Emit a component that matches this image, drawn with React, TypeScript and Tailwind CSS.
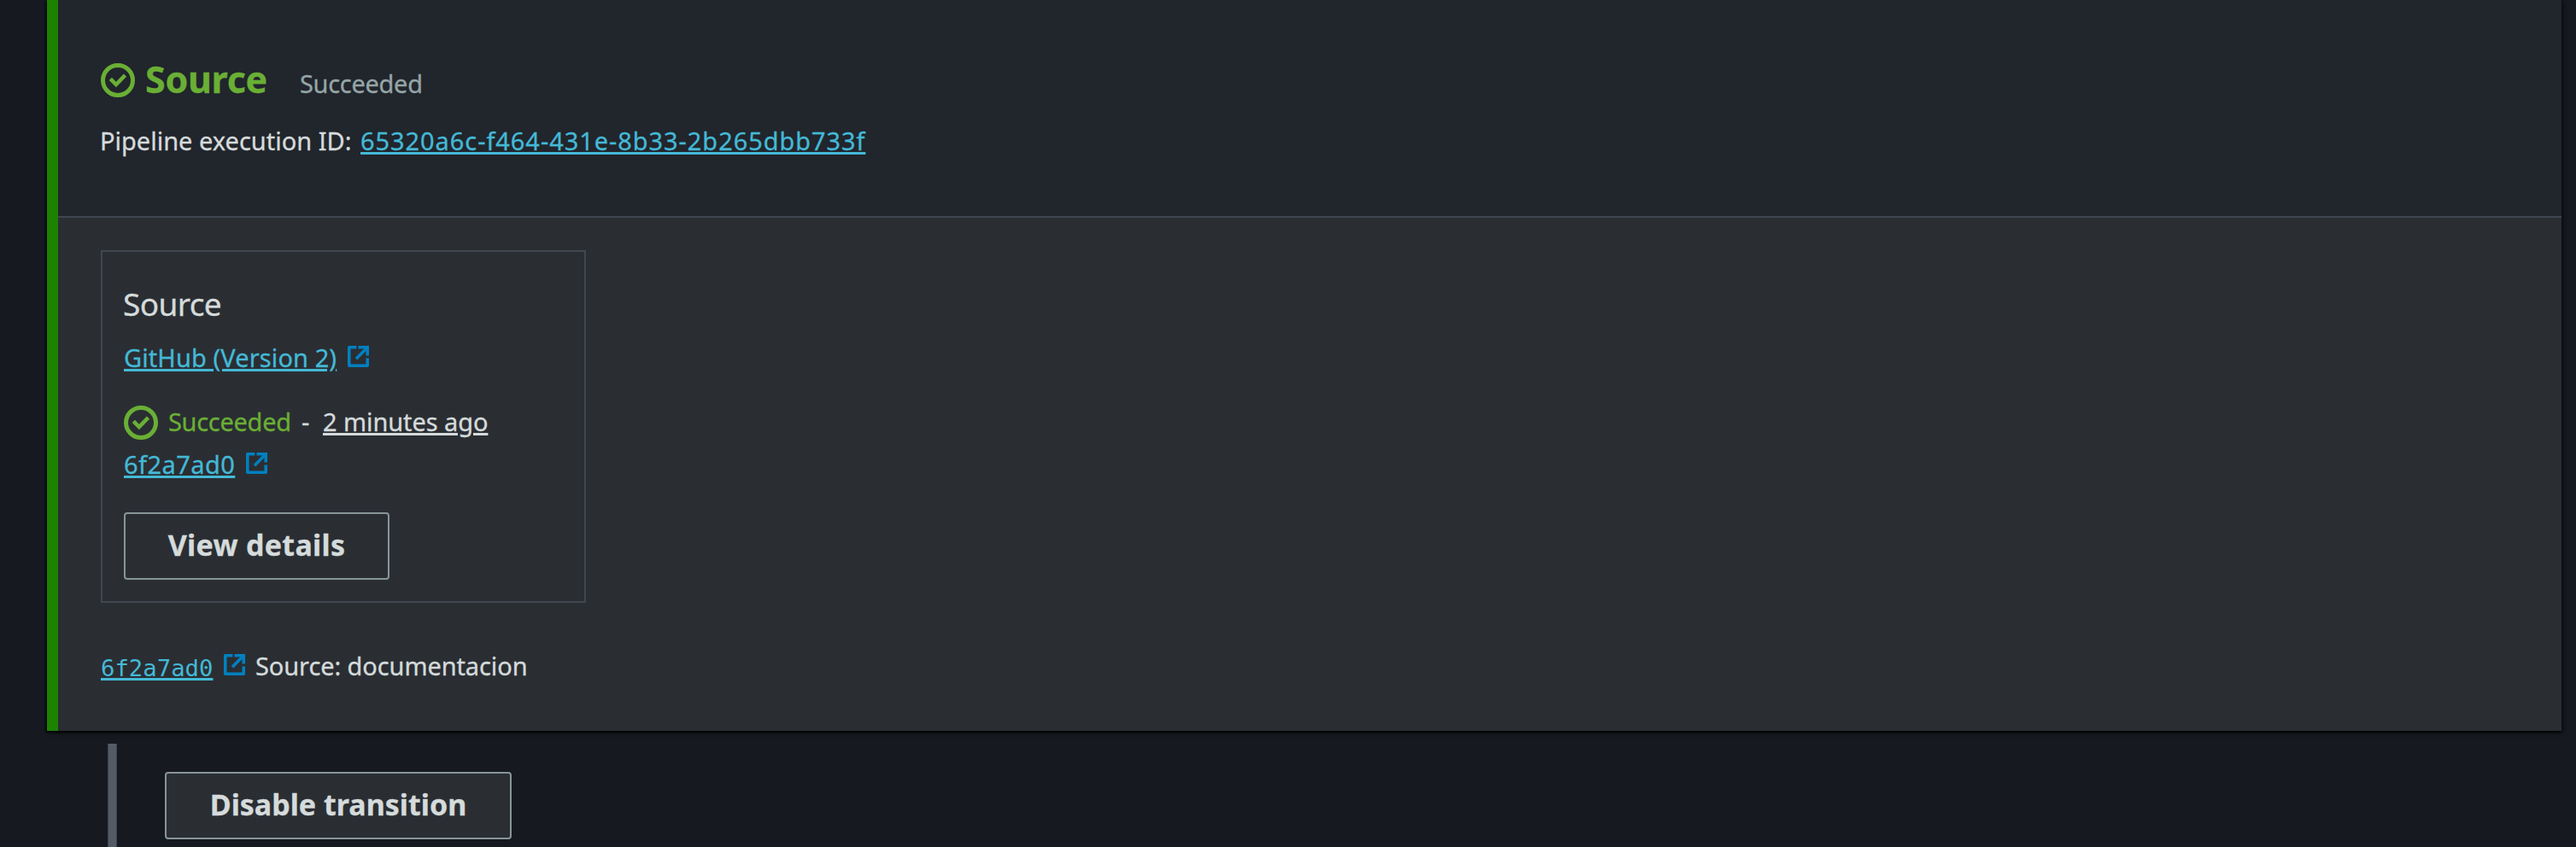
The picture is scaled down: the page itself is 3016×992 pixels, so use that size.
import React from "react";

function ExternalIcon() {
  return (
    <svg className="mt-1.5 size-[25px] shrink-0" viewBox="1 1 14 14" fill="none" stroke="#0080c0" strokeWidth="2">
      <path d="M6.800 2H2V14H14V9.100" strokeLinejoin="round" />
      <path d="M8 2H14V7.400" />
      <path d="M14 2L6.600 9.600" />
    </svg>
  );
}

function CheckIcon() {
  return (
    <svg className="size-10 shrink-0" viewBox="0 0 40 40" fill="none" stroke="#6aaf35">
      <circle cx="20" cy="20" r="17.500" strokeWidth="5" />
      <path d="M11.300 18.300L17.900 25L28.500 14.200" strokeWidth="4.600" />
    </svg>
  );
}

function Link({ className = "", children }: { className?: string; children: React.ReactNode }) {
  return (
    <a className={`underline decoration-[3px] underline-offset-2 ${className}`}>
      {children}
    </a>
  );
}

function Button({ className = "", children }: { className?: string; children: React.ReactNode }) {
  return (
    <button
      className={`flex h-[79px] items-center justify-center rounded-[4px] border-2 border-[#879596] bg-[#2a2e33] pb-[3px] text-[34px] font-bold ${className}`}
    >
      {children}
    </button>
  );
}

export default function App() {
  return (
    <div className="flex h-[992px] w-[3016px] flex-col overflow-hidden bg-[#16191f] font-['Noto_Sans',sans-serif] text-[29px] leading-[40px] whitespace-nowrap text-[#d5dbdb] [-webkit-text-stroke:0.3px_currentColor]">
      <section className="ml-[55px] h-[856px] w-[2944px] shrink-0 border-l-[13px] border-[#1d8102] bg-[#2a2e33] shadow-[0_2px_2px_0_rgba(0,0,0,0.5),2px_2px_5px_0_rgba(0,0,0,0.5),-2px_2px_2px_0_rgba(0,0,0,0.4)]">
        <header className="h-[255px] border-b-2 border-[#414750] bg-[#21252c] pt-[74px] pl-[50px]">
          <div className="flex h-10 items-start">
            <CheckIcon />
            <div className="-mt-px ml-3 flex items-baseline">
              <h2 className="text-[43px] font-bold tracking-[-0.3px] text-[#6aaf35]">Source</h2>
              <span className="ml-[38px] tracking-[-0.3px] text-[#95a5a6]">Succeeded</span>
            </div>
          </div>
          <div className="mt-[31px] flex">
            <span className="-ml-px w-[305px]">Pipeline execution ID:</span>
            <Link className="tracking-[0.930px] text-[#44b9d6]">65320a6c-f464-431e-8b33-2b265dbb733f</Link>
          </div>
        </header>

        <div className="pt-[38px] pl-[50px]">
          <div className="h-[413px] w-[568px] border-2 border-[#414750] pt-[41px] pl-[25px]">
            <h3 className="-ml-px text-[37px] tracking-[-0.600px]">Source</h3>
            <div className="mt-[23px] flex gap-[13px]">
              <Link className="tracking-[0.1px] text-[#44b9d6]">GitHub (Version 2)</Link>
              <ExternalIcon />
            </div>
            <div className="mt-9 flex h-10">
              <CheckIcon />
              <div className="-mt-px ml-3 flex">
                <span className="w-[156px] tracking-[-0.3px] text-[#6aaf35]">Succeeded</span>
                <span className="w-[25px]">-</span>
                <Link className="tracking-[-0.080px]">2 minutes ago</Link>
              </div>
            </div>
            <div className="mt-[9px] flex gap-[13px]">
              <Link className="tracking-[0.450px] text-[#44b9d6]">6f2a7ad0</Link>
              <ExternalIcon />
            </div>
            <Button className="mt-9 w-[311px] tracking-[0.300px]">View details</Button>
          </div>

          <div className="mt-[54px] flex">
            <div className="w-[144px] pt-px">
              <Link className="font-['DejaVu_Sans_Mono',monospace] text-[27.300px] text-[#44b9d6] [-webkit-text-stroke:0px]">6f2a7ad0</Link>
            </div>
            <ExternalIcon />
            <span className="ml-3 tracking-[-0.100px]">Source: documentacion</span>
          </div>
        </div>
      </section>

      <div className="mt-[15px] ml-[126px] flex h-[121px] items-start">
        <div className="h-full w-[11px] border-x border-[#3f454d] bg-[#545b64]" />
        <Button className="mt-[33px] ml-14 w-[406px]">Disable transition</Button>
      </div>
    </div>
  );
}
